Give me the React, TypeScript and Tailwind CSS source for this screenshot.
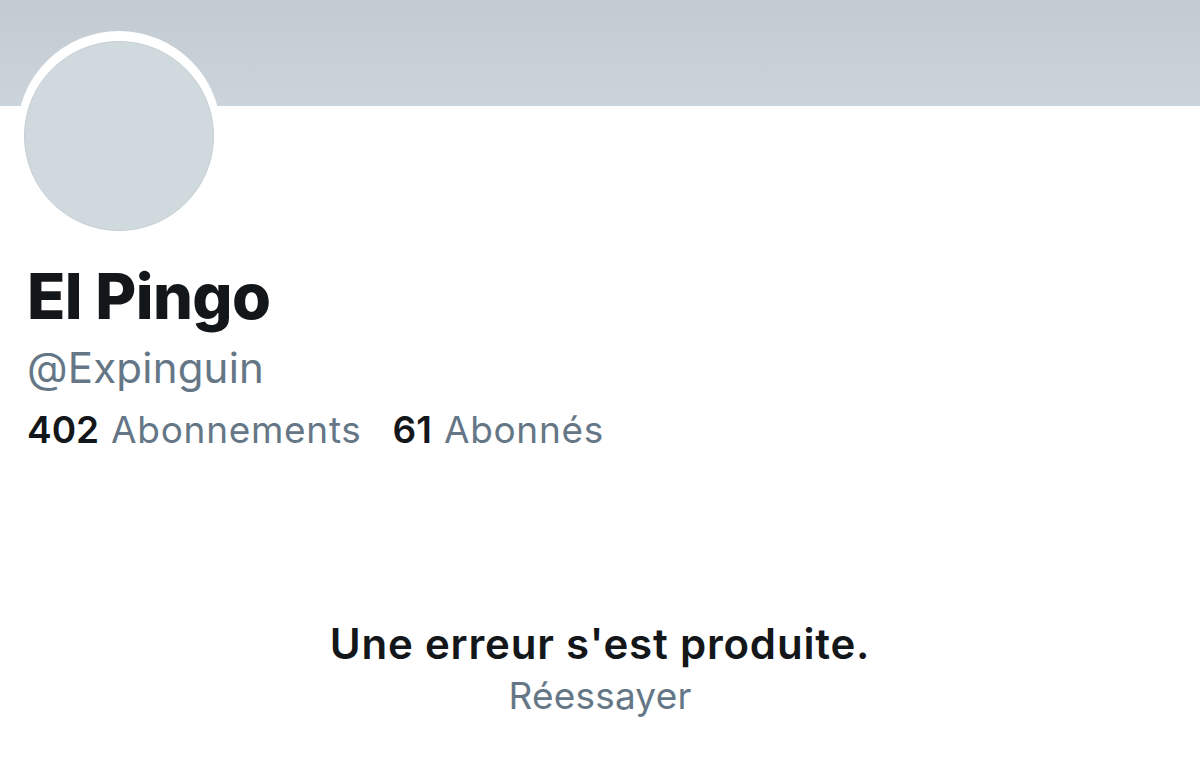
export default function App() {
  return (
    <div className="min-h-screen w-[1200px] h-[778px] overflow-hidden bg-white" style={{ fontFamily: 'Inter, "Liberation Sans", sans-serif' }}>
      {/* Banner */}
      <div className="h-[106px] w-full bg-gradient-to-b from-[#c3cbd2] to-[#ccd4db]" />

      {/* Profile header */}
      <div className="px-[27px]">
        <div className="-mt-[75px] -ml-[10px] w-[204px] h-[204px] rounded-full bg-white flex items-center justify-center">
          <div className="w-[190px] h-[190px] rounded-full bg-[#cfd9de] border border-[#c4ced4] mt-[6px]" />
        </div>

        <h1 className="mt-[30px] text-[63px] leading-none font-extrabold tracking-[-0.6px] text-[#14171a]">
          El Pingo
        </h1>
        <div className="mt-[19px] text-[42px] leading-none text-[#657786] tracking-[0.2px]">
          @Expinguin
        </div>
        <div className="mt-[22px] flex items-baseline text-[37px] leading-none">
          <span className="font-semibold text-[#14171a]">402</span>
          <span className="ml-[12px] text-[#657786] tracking-[0.7px]">Abonnements</span>
          <span className="ml-[31px] font-semibold text-[#14171a]">61</span>
          <span className="ml-[12px] text-[#657786] tracking-[0.7px]">Abonnés</span>
        </div>
      </div>

      {/* Error */}
      <div className="mt-[175px] flex flex-col items-center">
        <div className="text-[42px] leading-none font-semibold text-[#14171a] tracking-[0.8px]">
          Une erreur s'est produite.
        </div>
        <button className="mt-[12px] text-[37px] leading-none text-[#657786] tracking-[0.2px]">
          Réessayer
        </button>
      </div>
    </div>
  )
}
